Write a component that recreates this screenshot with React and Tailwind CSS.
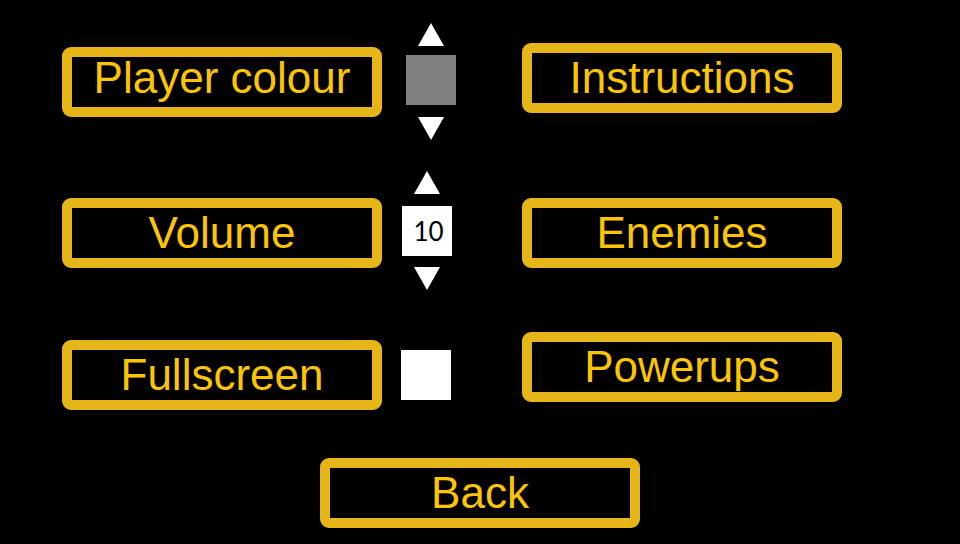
import React from "react";

// settings menu: yellow framed buttons with little white controls beside them
const Btn = ({ label, className = "", textClass = "" }) => (
  <div
    className={
      "flex h-[70px] w-[320px] shrink-0 items-center justify-center rounded-[9px] border-[10px] border-[#e6b618] bg-black " +
      className
    }
  >
    <span
      className={"text-[44px] leading-none text-[#fdc500] " + textClass}
      style={{ fontFamily: '"Liberation Sans", Arial, sans-serif' }}
    >
      {label}
    </span>
  </div>
);

const Tri = ({ down }) => (
  <svg width="26" height="23" viewBox="0 0 26 23" className="block">
    {down ? (
      <polygon points="0,0 26,0 13,23" fill="#fff" />
    ) : (
      <polygon points="13,0 26,23 0,23" fill="#fff" />
    )}
  </svg>
);

export default function App() {
  return (
    <div className="flex h-[544px] w-[960px] flex-col overflow-hidden bg-black">
      {/* player colour */}
      <div className="mt-[23px] flex h-[116px] items-center pl-[62px]">
        <Btn label="Player colour" className="mt-[1px]" textClass="mb-[8px]" />
        <div className="ml-[24px] flex w-[50px] flex-col items-center">
          <Tri />
          <div className="mt-[9px] h-[50px] w-[50px] bg-[#808080]" />
          <div className="mt-[12px]">
            <Tri down />
          </div>
        </div>
        <Btn label="Instructions" className="mb-[7px] ml-[66px] w-[319px]" />
      </div>

      {/* volume */}
      <div className="mt-[33px] flex h-[117px] items-center pl-[62px]">
        <Btn label="Volume" className="mt-[5px]" />
        <div className="ml-[20px] flex w-[50px] flex-col items-center">
          <Tri />
          <div
            className="mt-[12px] flex h-[50px] w-[50px] items-center justify-center bg-white pl-[3px] text-[26px] font-normal leading-none text-black"
            style={{ fontFamily: "Lato, sans-serif" }}
          >
            10
          </div>
          <div className="mt-[11px]">
            <Tri down />
          </div>
        </div>
        <Btn label="Enemies" className="mt-[5px] ml-[70px] w-[319px]" />
      </div>

      {/* fullscreen */}
      <div className="mt-[43px] flex h-[78px] items-start pl-[62px]">
        <Btn label="Fullscreen" className="mt-[8px]" />
        <div className="ml-[19px] mt-[18px] h-[50px] w-[50px] bg-white" />
        <Btn label="Powerups" className="ml-[71px] w-[319px]" />
      </div>

      {/* back */}
      <div className="mt-[48px] flex justify-center">
        <Btn label="Back" />
      </div>
    </div>
  );
}
